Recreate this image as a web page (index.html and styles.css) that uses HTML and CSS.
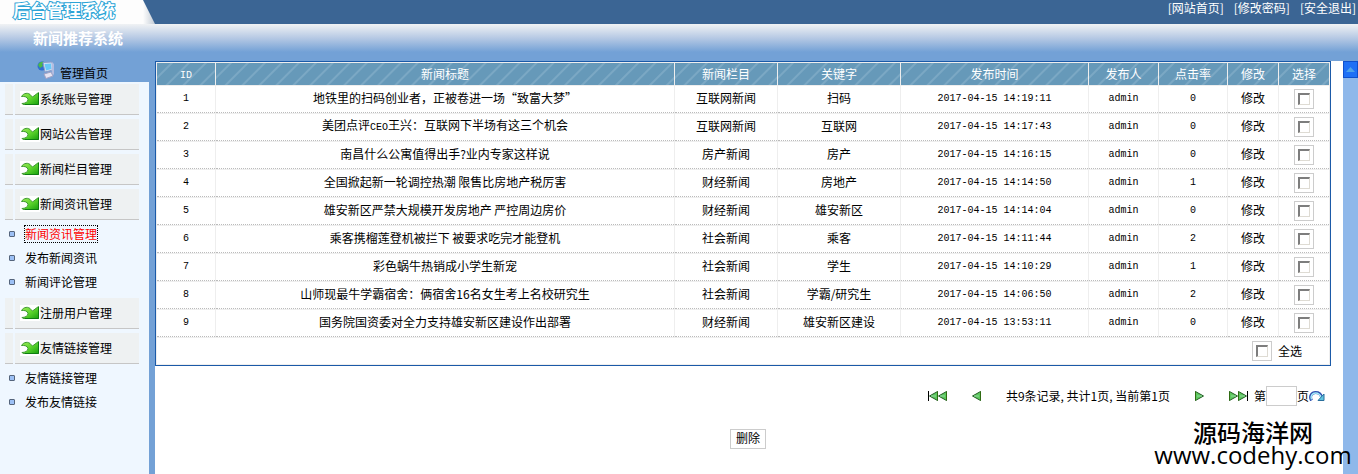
FILE: index.html
```html
<!DOCTYPE html>
<html lang="zh-CN">
<head>
    <meta charset="UTF-8">
    <title>后台管理系统</title>
    <link rel="stylesheet" href="styles.css">
</head>
<body>
<!--图标-->
<svg class="icons" aria-hidden="true">
    <defs>
        <linearGradient id="green" x1="0" y1="0" x2="1" y2="1">
            <stop offset="0" stop-color="#a4ec5c"></stop>
            <stop offset="0.5" stop-color="#5fd62e"></stop>
            <stop offset="1" stop-color="#17a00f"></stop>
        </linearGradient>
        <symbol id="leaf" viewBox="0 0 20 16">
            <path d="M1.500 5.500C3.500 2 8.500 1 11 4.500L12.500 6L18.500 1.500V13.500H4C2.500 13.500 2 12.500 2 12.500C5 12.500 8 11 8 8.500C7.500 6 4.500 5 1.500 5.500Z" fill="url(#green)" stroke="#3f9a34"></path>
            <path d="M18.500 2V13.500H5" fill="none" stroke="#0f7d12"></path>
        </symbol>
        <symbol id="play" viewBox="0 0 9 10">
            <path d="M0.500 0.500L8.500 5L0.500 9.500Z" fill="#5cc85c" stroke="#245c24"></path>
            <path d="M0.500 0.500V9.500" stroke="#2f6b12"></path>
            <path d="M2 5H7" stroke="#8fd6a0"></path>
        </symbol>
    </defs>
</svg>
<div class="top">
    <h1 class="logo">后台管理系统</h1>
    <div class="top_links">
        <a href="#">[网站首页]</a>
        <a href="#">[修改密码]</a>
        <a href="#">[安全退出]</a>
    </div>
</div>
<div class="banner">新闻推荐系统</div>
<div class="container">
    <div class="side">
        <a class="home" href="#">
            <svg width="18" height="18" viewBox="0 0 18 18">
                <circle cx="5" cy="5" r="4.500" fill="#2f6fd0"></circle>
                <path d="M1 4C2 1 5 0 7 1L5 3L6 5L3 7Z" fill="#4cb848"></path>
                <path d="M6 1.500L15 1L16 9L8 11Z" fill="#d7e3f5" stroke="#8c9cc8"></path>
                <path d="M7.500 3L14 2.500L14.500 8L9 9.500Z" fill="#68c8f8"></path>
                <path d="M15 1L17 3V13L15.500 15L14.500 9Z" fill="#b3bce0"></path>
                <path d="M7 13L14 11L16 15L9 17.500Z" fill="#e6e4f2" stroke="#a3a3c4"></path>
            </svg>
            管理首页
        </a>
        <div class="menu">
            <a class="menu_item" href="#"><span><svg width="20" height="16"><use href="#leaf"></use></svg>系统账号管理</span></a>
            <a class="menu_item" href="#"><span><svg width="20" height="16"><use href="#leaf"></use></svg>网站公告管理</span></a>
            <a class="menu_item" href="#"><span><svg width="20" height="16"><use href="#leaf"></use></svg>新闻栏目管理</span></a>
            <a class="menu_item" href="#"><span><svg width="20" height="16"><use href="#leaf"></use></svg>新闻资讯管理</span></a>
            <ul class="sub">
                <li><a class="on" href="#">新闻资讯管理</a></li>
                <li><a href="#">发布新闻资讯</a></li>
                <li><a href="#">新闻评论管理</a></li>
            </ul>
            <a class="menu_item" href="#"><span><svg width="20" height="16"><use href="#leaf"></use></svg>注册用户管理</span></a>
            <a class="menu_item" href="#"><span><svg width="20" height="16"><use href="#leaf"></use></svg>友情链接管理</span></a>
            <ul class="sub">
                <li><a href="#">友情链接管理</a></li>
                <li><a href="#">发布友情链接</a></li>
            </ul>
        </div>
    </div>
    <div class="main">
        <table class="list">
            <colgroup>
                <col class="w_id">
                <col>
                <col class="w_type">
                <col class="w_key">
                <col class="w_time">
                <col class="w_user">
                <col class="w_hits">
                <col class="w_edit">
                <col class="w_edit">
            </colgroup>
            <thead>
            <tr>
                <th><span class="en">ID</span></th>
                <th>新闻标题</th>
                <th>新闻栏目</th>
                <th>关键字</th>
                <th>发布时间</th>
                <th>发布人</th>
                <th>点击率</th>
                <th>修改</th>
                <th>选择</th>
            </tr>
            </thead>
            <tbody id="table"></tbody>
            <tfoot>
            <tr>
                <td colspan="9">
                    <div class="all"><input type="checkbox" id="all"><label for="all">全选</label></div>
                </td>
            </tr>
            </tfoot>
        </table>
        <div class="pager">
            <a class="first" href="#" aria-label="首页"><svg width="9" height="10"><use href="#play"></use></svg><svg width="9" height="10"><use href="#play"></use></svg></a>
            <a class="prev" href="#" aria-label="上一页"><svg width="9" height="10"><use href="#play"></use></svg></a>
            <span>共9条记录, 共计1页, 当前第1页</span>
            <a class="next" href="#" aria-label="下一页"><svg width="9" height="10"><use href="#play"></use></svg></a>
            <a class="last" href="#" aria-label="尾页"><svg width="9" height="10"><use href="#play"></use></svg><svg width="9" height="10"><use href="#play"></use></svg></a>
            <div class="jump">
                <label for="page">第</label><input type="text" id="page"><span>页</span>
                <a href="#" aria-label="跳转">
                    <svg width="16" height="10" viewBox="0 0 16 10">
                        <path d="M2.500 9.500C0 5 3 1.500 6.500 1.500C10 1.500 12 3.500 12.500 6" fill="none" stroke="#2f4fb0" stroke-width="3"></path>
                        <path d="M2.500 8.500C1 5 3.500 2 6.500 2C10 2 11.500 4 12.500 7" fill="none" stroke="#a5ecfa" stroke-width="1.500"></path>
                        <path d="M15 3V9.500H9Z" fill="#5fc4e0" stroke="#2a6f9c"></path>
                    </svg>
                </a>
            </div>
        </div>
        <div class="btns">
            <button class="del_btn" type="button">删除</button>
        </div>
    </div>
    <div class="scroll"><div class="scroll_up"><svg width="9" height="5" viewBox="0 0 9 5"><path d="M0 5L4.500 0L9 5Z" fill="#4fa3e8"></path></svg></div></div>
</div>
<div class="mark">
    <div>源码海洋网</div>
    <div class="mark_url">www.codehy.com</div>
</div>
<script type="text/javascript">
    //新闻数据：标题、栏目、关键字、时间、点击率
    var news = [
        ['地铁里的扫码创业者，正被卷进一场“致富大梦”', '互联网新闻', '扫码', '2017-04-15 14:19:11', 0],
        ['美团点评<span class="en">CEO</span>王兴：互联网下半场有这三个机会', '互联网新闻', '互联网', '2017-04-15 14:17:43', 0],
        ['南昌什么公寓值得出手?业内专家这样说', '房产新闻', '房产', '2017-04-15 14:16:15', 0],
        ['全国掀起新一轮调控热潮 限售比房地产税厉害', '财经新闻', '房地产', '2017-04-15 14:14:50', 1],
        ['雄安新区严禁大规模开发房地产 严控周边房价', '财经新闻', '雄安新区', '2017-04-15 14:14:04', 0],
        ['乘客携榴莲登机被拦下 被要求吃完才能登机', '社会新闻', '乘客', '2017-04-15 14:11:44', 2],
        ['彩色蜗牛热销成小学生新宠', '社会新闻', '学生', '2017-04-15 14:10:29', 1],
        ['山师现最牛学霸宿舍：俩宿舍16名女生考上名校研究生', '社会新闻', '学霸/研究生', '2017-04-15 14:06:50', 2],
        ['国务院国资委对全力支持雄安新区建设作出部署', '财经新闻', '雄安新区建设', '2017-04-15 13:53:11', 0]
    ];
    var html = '';
    for (var i = 0; i < news.length; i++) {
        var n = news[i];
        html += '<tr><td class="en">' + (i + 1) + '</td>';
        html += '<td>' + n[0] + '</td><td>' + n[1] + '</td><td>' + n[2] + '</td>';
        html += '<td class="en">' + n[3] + '</td><td class="en">admin</td><td class="en">' + n[4] + '</td>';
        html += '<td><a href="#">修改</a></td>';
        html += '<td><input type="checkbox" name="id" aria-label="选择' + (i + 1) + '"></td></tr>';
    }
    document.getElementById('table').innerHTML = html;
    //全选
    document.getElementById('all').onclick = function () {
        var box = document.getElementsByName('id');
        for (var i = 0; i < box.length; i++) {
            box[i].checked = this.checked;
        }
    };
</script>
</body>
</html>
```
FILE: styles.css
```css
* {
    box-sizing: border-box;
}

body {
    margin: 0;
    min-height: 100vh;
    display: flex;
    flex-direction: column;
    position: relative;
    font: 12px/16px "Noto Sans CJK SC", sans-serif;
    color: #000;
    background: #fff;
}

a {
    color: inherit;
    text-decoration: none;
}

svg {
    display: block;
    flex: none;
}

.icons {
    position: absolute;
    width: 0;
    height: 0;
}

.en {
    font-family: "Liberation Mono", monospace;
    font-size: 10px;
}

/*头部*/
.top {
    display: flex;
    height: 24px;
    background: #3b6594;
}

.logo {
    width: 143px;
    margin: 0;
    padding-left: 13px;
    font-size: 17px;
    line-height: 20px;
    color: #fff;
    background: #fdfdfd;
    -webkit-text-stroke: 2px #2ba3d6;
    paint-order: stroke fill;
}

.top::after {
    content: "";
    order: 1;
    width: 12px;
    background: linear-gradient(90deg, #fdfdfd, #c3ccd6);
    clip-path: polygon(0 0, 100% 100%, 0 100%);
}

.top_links {
    order: 2;
    display: flex;
    gap: 10px;
    margin-left: auto;
    padding-right: 2px;
    color: #fff;
}

.banner {
    height: 37px;
    padding-left: 33px;
    font-size: 15px;
    font-weight: bold;
    line-height: 28px;
    color: #fff;
    background: linear-gradient(#f0f2f4, #b6c9e4 14px, #73a1d6 28px);
}

.container {
    flex: 1;
    display: flex;
    background: #73a1d6;
}

/*左侧菜单*/
.side {
    width: 149px;
    margin-right: 6px;
    display: flex;
    flex-direction: column;
}

.home {
    display: flex;
    gap: 5px;
    height: 21px;
    padding-left: 37px;
    line-height: 24px;
}

.menu {
    flex: 1;
    padding: 2px 10px 0 5px;
    background: #eff7ff;
}

.menu_item {
    display: flex;
    gap: 2px;
    height: 31px;
    margin-bottom: 4px;
}

.menu_item::before {
    content: "";
    width: 8px;
    background: #eef1f2;
    border-bottom: 1px solid #c6c6c6;
}

.menu_item span {
    flex: 1;
    display: flex;
    align-items: center;
    padding-left: 5px;
    background: #eef1f2;
    border-bottom: 1px solid #c6c6c6;
}

.menu_item svg {
    background: #fff;
}

.sub {
    margin: -2px 0 4px;
    padding: 0;
    list-style: none;
}

.sub li {
    display: flex;
    align-items: center;
    gap: 10px;
    height: 24px;
    padding-left: 4px;
}

.sub li::before {
    content: "";
    width: 4px;
    height: 4px;
    border: 1px solid #55657c;
    border-radius: 1px;
    background: #9cc0f5;
}

.sub .on {
    color: #f00;
    outline: 1px dotted #000;
}

/*列表*/
.main {
    flex: 1;
    padding-right: 12px;
    background: #fff;
}

.list {
    width: 100%;
    table-layout: fixed;
    border: 1px solid #1b5aa8;
    border-spacing: 1px;
    background: #eee;
    text-align: center;
}

.list th {
    height: 22px;
    padding: 0;
    font-weight: normal;
    color: #fff;
    background: repeating-linear-gradient(135deg, #6699b9 0, #6699b9 9px, #7ba8c4 10px, #7ba8c4 11px, #6699b9 12px);
}

.list td {
    height: 27px;
    padding: 0 0 2px;
    background: #fff;
    border-bottom: 1px dotted #bbb;
}

.list .en {
    padding: 0;
}

.list tbody td:last-child {
    padding: 0;
}

.list tfoot td {
    height: 26px;
    padding: 0;
    border-bottom: none;
}

.w_id {
    width: 58px;
}

.w_type {
    width: 102px;
}

.w_key {
    width: 122px;
}

.w_time {
    width: 187px;
}

.w_user {
    width: 69px;
}

.w_hits {
    width: 68px;
}

.w_edit {
    width: 50px;
}

input {
    border: 1px solid #ccc;
    background: #fff;
}

input[type=checkbox] {
    appearance: none;
    display: block;
    width: 20px;
    height: 20px;
    margin: 0 auto;
    padding: 3px;
}

input[type=checkbox]::before {
    content: "";
    display: block;
    width: 9px;
    height: 9px;
    border: 1px solid #dedbd3;
    border-top: 2px solid #7d7d7d;
    border-left: 2px solid #7d7d7d;
}

input[type=checkbox]:checked::before {
    background: #3b6594;
}

.all {
    display: flex;
    justify-content: flex-end;
    align-items: center;
    gap: 6px;
    padding-right: 27px;
}

.all input[type=checkbox] {
    margin: 0;
}

/*分页*/
.pager {
    display: flex;
    justify-content: flex-end;
    align-items: center;
    gap: 25px;
    margin-top: 20px;
    padding-right: 6px;
}

.pager a {
    display: flex;
}

.first,
.prev {
    transform: scaleX(-1);
}

.first,
.last {
    border-right: 1px solid #000;
}

.jump {
    display: flex;
    align-items: center;
    margin-left: -19px;
}

.jump input {
    width: 31px;
    height: 20px;
}

.btns {
    margin-top: 23px;
    text-align: center;
    padding-left: 10px;
}

.del_btn {
    height: 20px;
    padding: 0 5px 2px;
    border: 1px solid #ccc;
    background: #fff;
    font: inherit;
    cursor: pointer;
}

.scroll {
    width: 15px;
    background: #8fb8ea;
}

.scroll_up {
    display: flex;
    align-items: center;
    justify-content: center;
    height: 17px;
    border: 1px solid #0f50cc;
    background: #1f70f5;
}

/*水印*/
.mark {
    position: absolute;
    right: 5px;
    bottom: 8px;
    width: 200px;
    text-align: center;
    font-size: 24px;
    font-weight: 500;
    line-height: 24px;
    pointer-events: none;
}

.mark_url {
    font-family: "Open Sans", sans-serif;
    line-height: 22px;
}
```
